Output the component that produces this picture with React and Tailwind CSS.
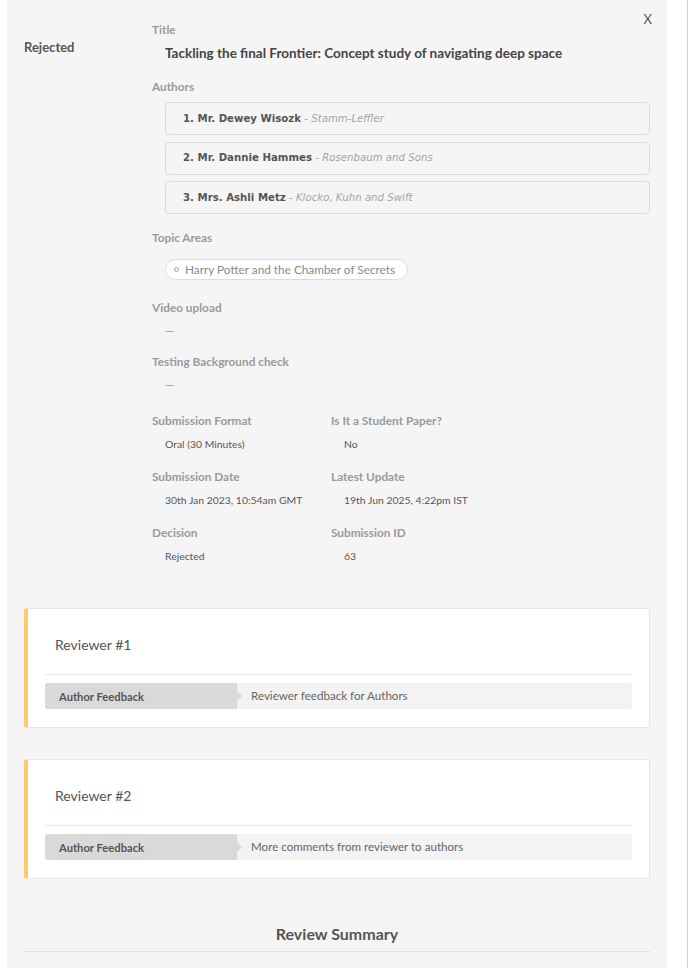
import React from "react";

const F = { fontFamily: "Lato, 'Open Sans', sans-serif" };
const D = { fontFamily: "'DejaVu Sans', Verdana, sans-serif" };

function Label({ children, className = "" }) {
  return (
    <div className={"text-[11.8px] leading-[16px] font-bold text-[#9a9a9a] " + className}>{children}</div>
  );
}

function Value({ children, className = "" }) {
  return (
    <div className={"text-[10.4px] leading-[18px] text-[#555] pl-[13px] " + className}>{children}</div>
  );
}

function Author({ n, name, org }) {
  return (
    <div className="h-[33px] flex items-center border border-[#dcdcdc] rounded-[4px] pl-[17px] text-[10.2px]" style={D}>
      <span className="font-bold text-[#555]">{n}. {name}</span>
      <span className="italic text-[#a5a5a5]">&nbsp;- {org}</span>
    </div>
  );
}

function ReviewCard({ title, text }) {
  return (
    <div className="bg-white border border-[#e6e6e6] border-l-[4px] border-l-[#fdc96b] rounded-[3px] pl-[17px] pr-[17px] pt-[26px] pb-[18px]">
      <div className="px-[10px] text-[14px] leading-[20px] text-[#555]">{title}</div>
      <div className="mt-[19px] border-t border-[#e8e8e8]"></div>
      <div className="mt-[8px] flex h-[26px] rounded-[3px] overflow-hidden bg-[#f3f3f3]">
        <div className="relative w-[192px] bg-[#d9d9d9] flex items-center pl-[14px] pt-[2px] text-[11.2px] font-bold text-[#555]">
          Author Feedback
          <span className="absolute right-[-5px] top-[8px] w-0 h-0 border-y-[5px] border-y-transparent border-l-[5px] border-l-[#d9d9d9]"></span>
        </div>
        <div className="flex items-center pl-[14px] text-[11.6px] text-[#666]">{text}</div>
      </div>
    </div>
  );
}

export default function App() {
  return (
    <div className="w-[688px] h-[968px] bg-white overflow-hidden relative" style={F}>
      <div className="absolute right-0 top-0 bottom-0 w-px bg-[#d4d4d4]"></div>
      <div className="ml-[7px] w-[660px] min-h-[968px] bg-[#f5f5f5] relative pt-[22px] px-[17px]">
        <button className="absolute right-[15px] top-[10px] text-[13px] text-[#555]">X</button>
        <div className="flex">
          <div className="w-[128px] shrink-0 pt-[17px] text-[13px] leading-[16px] font-bold text-[#555]">Rejected</div>
          <div className="flex-1">
            <Label>Title</Label>
            <div className="mt-[6px] pl-[13px] text-[13.5px] leading-[18px] font-bold text-[#444]">
              Tackling the final Frontier: Concept study of navigating deep space
            </div>
            <Label className="mt-[17px]">Authors</Label>
            <div className="mt-[7px] pl-[13px] flex flex-col gap-[6.5px]">
              <Author n="1" name="Mr. Dewey Wisozk" org="Stamm-Leffler" />
              <Author n="2" name="Mr. Dannie Hammes" org="Rosenbaum and Sons" />
              <Author n="3" name="Mrs. Ashli Metz" org="Klocko, Kuhn and Swift" />
            </div>
            <Label className="mt-[16px]">Topic Areas</Label>
            <div className="mt-[8px] pl-[13px]">
              <span className="inline-flex items-center h-[21px] rounded-full border border-[#dcdcdc] bg-white pl-[8px] pr-[12px] text-[11.8px] text-[#8a8a8a]">
                <span className="w-[5px] h-[5px] rounded-full border border-[#999] mr-[6px]"></span>
                Harry Potter and the Chamber of Secrets
              </span>
            </div>
            <Label className="mt-[20px]">Video upload</Label>
            <Value className="mt-[6px] text-[#999] text-[12px]">—</Value>
            <Label className="mt-[14px]">Testing Background check</Label>
            <Value className="mt-[6px] text-[#999] text-[12px]">—</Value>
            <div className="mt-[19px] grid grid-cols-[179px_1fr] gap-y-[16px]">
              <div>
                <Label>Submission Format</Label>
                <Value className="mt-[6px]">Oral (30 Minutes)</Value>
              </div>
              <div>
                <Label>Is It a Student Paper?</Label>
                <Value className="mt-[6px]">No</Value>
              </div>
              <div>
                <Label>Submission Date</Label>
                <Value className="mt-[6px]">30th Jan 2023, 10:54am GMT</Value>
              </div>
              <div>
                <Label>Latest Update</Label>
                <Value className="mt-[6px]">19th Jun 2025, 4:22pm IST</Value>
              </div>
              <div>
                <Label>Decision</Label>
                <Value className="mt-[6px]">Rejected</Value>
              </div>
              <div>
                <Label>Submission ID</Label>
                <Value className="mt-[6px]">63</Value>
              </div>
            </div>
          </div>
        </div>
        <div className="mt-[43px] flex flex-col gap-[31px]">
          <ReviewCard title="Reviewer #1" text="Reviewer feedback for Authors" />
          <ReviewCard title="Reviewer #2" text="More comments from reviewer to authors" />
        </div>
        <div className="mt-[44px] text-center text-[16px] leading-[22px] font-bold text-[#555]">Review Summary</div>
        <div className="mt-[6px] border-t border-[#e3e3e3]"></div>
      </div>
    </div>
  );
}
